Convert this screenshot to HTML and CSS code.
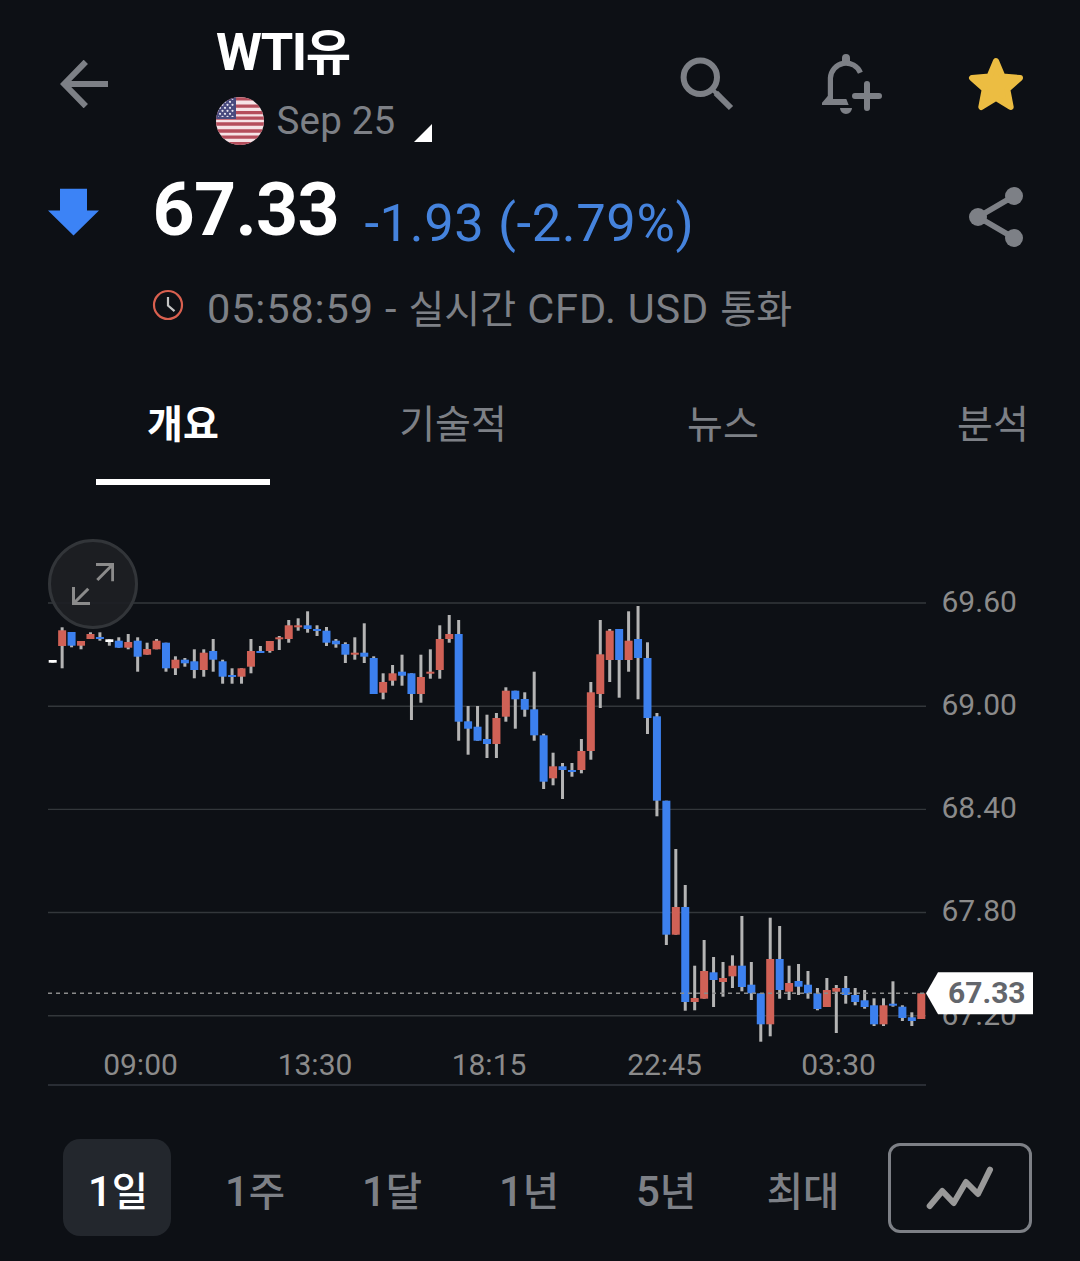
FILE: index.html
```
<!DOCTYPE html>
<html lang="ko">

<head>
    <meta charset="UTF-8">
    <meta name="viewport" content="width=device-width, initial-scale=1.0">
    <title>WTI유</title>
    <link rel="stylesheet" href="styles.css">
</head>

<body>
    <header class="header">
        <svg class="icon-back" width="48" height="48" viewBox="60 60 48 48">
            <path d="M85.8 61.8 64.2 84l21.6 22.2M64 84h44" />
        </svg>
        <div class="header-title">
            <h1>WTI<span class="ko">유</span></h1>
            <div class="contract">
                <svg class="flag" width="48" height="48" viewBox="0 0 48 48">
                    <defs>
                        <clipPath id="flagClip"><circle cx="24" cy="24" r="24" /></clipPath>
                        <pattern id="stars" width="5" height="6" patternUnits="userSpaceOnUse">
                            <circle cx="1.5" cy="1.8" r="1.1" fill="#e6e4f0" />
                            <circle cx="4" cy="4.8" r="1.1" fill="#e6e4f0" />
                        </pattern>
                    </defs>
                    <g clip-path="url(#flagClip)">
                        <rect width="48" height="48" fill="#f6e3e6" />
                        <path d="M0 1.8h48M0 9.2h48M0 15.6h48M0 21.2h48M0 27h48M0 34h48M0 40.2h48M0 46.6h48" stroke="#b54e5c" stroke-width="3.3" />
                        <rect width="20" height="22" fill="#484a7e" />
                        <rect x="2" y="2" width="16" height="18" fill="url(#stars)" />
                    </g>
                </svg>
                <span class="contract-name">Sep 25</span>
                <span class="contract-more"></span>
            </div>
        </div>
        <div class="header-actions">
            <svg width="54" height="54" viewBox="680 56 54 54">
                <circle cx="700.3" cy="76.3" r="16.7" />
                <path d="M713.5 89.5 717 93" stroke-width="4" />
                <path d="M715.8 91.8 731 107" />
            </svg>
            <svg class="bell" width="60" height="62" viewBox="822 53 60 62">
                <path d="M830.4 99V78a15.6 15.6 0 0 1 30-5.2" stroke-width="5.2" />
                <path class="fill" d="M842 63v-5a4 4 0 0 1 8 0v5zM822 105v-2.3l6-7h5V99h13.3l2.4 6zM840 108h12a6 6 0 0 1-12 0z" />
                <path d="M855 96h24M867 84v24" stroke-linecap="round" />
            </svg>
            <svg class="star" width="56" height="56" viewBox="968 56 56 56">
                <path d="M996 61 1002.5 76.5 1020 78 1007.3 89.3 1010.7 107 996 98 981.3 107 984.7 89.3 972 78 989.5 76.5z" />
            </svg>
        </div>
    </header>

    <section class="quote">
        <svg class="quote-arrow" width="51" height="48" viewBox="0 0 51 48">
            <path d="M12 .7h27v21.8h12L25.5 47.6 0 22.500h12z" />
        </svg>
        <span class="quote-last">67.33</span>
        <span class="quote-change">-1.93 (-2.79%)</span>
        <svg class="quote-share" width="56" height="60" viewBox="968 187 56 60">
            <path d="M1014 196 978 217l36 21" />
            <circle cx="1014" cy="196" r="9" />
            <circle cx="978" cy="217" r="9" />
            <circle cx="1014" cy="238" r="9" />
        </svg>
    </section>

    <div class="quote-info">
        <svg width="32" height="32" viewBox="0 0 32 32">
            <circle cx="16" cy="16" r="14" stroke="#d9604f" stroke-width="2.200" />
            <path d="M16 8v8.500l6.500 5.700" stroke="#c4c4c4" stroke-width="2.200" />
        </svg>
        <span>05:58:59 - <span class="ko">실시간</span> CFD. USD <span class="ko">통화</span></span>
    </div>

    <nav class="tabs">
        <a class="tab active">개요</a>
        <a class="tab">기술적</a>
        <a class="tab">뉴스</a>
        <a class="tab">분석</a>
    </nav>

    <section class="chart">
        <svg id="chart" width="1080" height="570" viewBox="0 530 1080 570">
            <g class="grid">
                <path d="M48 603h878M48 706.200h878M48 809.400h878M48 912.500h878M48 1015.700h878" />
                <path class="grid-bottom" d="M48 1085h878" />
            </g>
            <g class="axis">
                <text x="941.5" y="612">69.60</text>
                <text x="941.5" y="715">69.00</text>
                <text x="941.5" y="818">68.40</text>
                <text x="941.5" y="921">67.80</text>
                <text x="941.5" y="1025">67.20</text>
                <text class="time" x="140.500" y="1075">09:00</text>
                <text class="time" x="315" y="1075">13:30</text>
                <text class="time" x="489" y="1075">18:15</text>
                <text class="time" x="664.500" y="1075">22:45</text>
                <text class="time" x="838.500" y="1075">03:30</text>
            </g>
            <g id="candles"></g>
            <path class="last-line" d="M48 993.300h878" />
            <path class="last-tag" d="M926 993.300 938 972.300h95v42h-95z" />
            <text class="last-text" x="948" y="1003.300">67.33</text>
        </svg>
        <button class="expand">
            <svg width="42" height="42" viewBox="72 563 42 42">
                <path d="M96 564.500h16.700v16.700M97.300 580l15.400-15.500M73.500 587v16.500H90M88.300 588.700l-14.800 14.800" />
            </svg>
        </button>
    </section>

    <div class="periods">
        <button class="period active">1<span class="ko">일</span></button>
        <button class="period">1<span class="ko">주</span></button>
        <button class="period">1<span class="ko">달</span></button>
        <button class="period">1<span class="ko">년</span></button>
        <button class="period">5<span class="ko">년</span></button>
        <button class="period"><span class="ko">최대</span></button>
        <button class="chart-type">
            <svg width="68" height="44" viewBox="926 1166 68 44">
                <path d="M929.700 1206l12.600-15 11.400 12 12.300-21 12 12 12-24.300" />
            </svg>
        </button>
    </div>

    <script>
        // [색상, 꼬리 위, 꼬리 아래, 몸통 위, 몸통 아래]
        const candles = [
            ["w", 660, 662.7, 660, 662.7], ["r", 627.3, 668.3, 630.3, 646], ["b", 632, 647.3, 632, 645.7],
            ["r", 641, 649.3, 641, 645.7], ["r", 632.3, 639, 634, 639], ["b", 632.3, 640.7, 637, 639],
            ["w", 639.3, 645.7, 639.3, 642], ["b", 637.3, 647.7, 640.7, 647.7], ["r", 634, 649.3, 642, 647.7],
            ["b", 637.3, 671.7, 640.7, 656.7], ["r", 642.7, 654.7, 649, 654.7], ["r", 639, 649.3, 640.7, 649.3],
            ["b", 642.7, 671.7, 642.7, 668.3], ["r", 656.3, 675, 659.7, 668.3], ["b", 658, 666.7, 659.7, 663.3],
            ["b", 649.3, 678.3, 661.3, 670], ["r", 649.3, 676.7, 652.7, 670], ["b", 639, 671.7, 651, 659.7],
            ["b", 659.7, 683.7, 661.3, 676.7], ["b", 668.3, 683.7, 675, 677], ["r", 668.3, 683.7, 668.3, 676.7],
            ["r", 639, 673.3, 651, 666.7], ["b", 646, 653, 651, 653], ["r", 641, 652.7, 641, 651],
            ["r", 636, 650, 637.3, 639.3], ["r", 620, 642.7, 625.3, 639], ["r", 618.3, 630.7, 625.3, 627.3],
            ["b", 611.3, 632.7, 625.3, 629], ["b", 625.3, 636, 629, 631], ["b", 627, 646, 630.7, 642.7],
            ["b", 639, 647.7, 640.7, 644.3], ["b", 642.3, 663, 644, 654.7], ["r", 637.3, 659.7, 652.7, 654.7],
            ["b", 623.3, 663, 652.7, 656.7], ["b", 656.3, 694, 658, 694], ["r", 673.3, 699.3, 682, 692.7],
            ["r", 665, 685.7, 673.3, 680.7], ["b", 654.7, 685.7, 671.7, 675.7], ["b", 673.3, 720, 673.3, 694],
            ["r", 654.7, 702.7, 677, 694], ["r", 649.3, 678.7, 671.7, 673.7], ["r", 625.3, 678.7, 639, 670],
            ["r", 615, 642.7, 634, 639], ["b", 620, 740.7, 634, 721.7], ["b", 706, 754.7, 721.3, 728.7],
            ["b", 706, 740.7, 726.7, 740.7], ["b", 714.7, 758, 739, 744], ["r", 713, 758, 718, 744],
            ["r", 687.3, 721.7, 690.7, 716.7], ["b", 690.7, 728.7, 690.7, 699.3], ["b", 692.3, 716.7, 699, 709.7],
            ["b", 671.7, 740.7, 709.3, 735.3], ["b", 733.7, 789, 735.3, 781.7], ["r", 752.7, 785.3, 766.3, 778.3],
            ["b", 763, 799, 766.3, 770], ["b", 763, 776.7, 770, 772], ["r", 739, 773.3, 751, 770],
            ["r", 682, 759.7, 692.3, 751], ["r", 620, 708, 654.3, 694], ["r", 629, 682, 630.7, 660],
            ["b", 629, 697.7, 629, 660], ["r", 611.3, 671.7, 640.7, 660], ["b", 606, 699.3, 639, 658],
            ["b", 642.3, 734, 658, 718], ["b", 713, 816.3, 716.3, 800.7], ["b", 800.7, 945, 800.7, 934.7],
            ["r", 849, 934.7, 907, 934.7], ["b", 885, 1010.7, 907, 1002], ["r", 965.7, 1010.3, 998, 1002],
            ["r", 940, 998.7, 971, 998.7], ["b", 957, 1007, 972.3, 980], ["r", 962, 996.7, 978, 982],
            ["r", 955.3, 988, 965.7, 976.3], ["b", 916, 991.3, 965.7, 987], ["b", 962, 1000, 984.7, 993.3],
            ["b", 993.3, 1041.7, 993.3, 1024.3], ["r", 917.7, 1036.3, 959, 1024.3], ["b", 926, 998.7, 959, 990],
            ["r", 965.7, 1000, 983, 991.7], ["b", 964, 995, 981, 986.7], ["b", 971, 998.7, 984.7, 993.3],
            ["b", 988, 1010.3, 993.3, 1009], ["r", 978, 1007, 990, 1007], ["r", 985, 1033, 988, 991.7],
            ["b", 976, 1003.7, 988, 995], ["b", 988, 1005.3, 995, 1002], ["b", 990, 1008.7, 1000.3, 1007],
            ["b", 998.3, 1026, 1005.3, 1024.3], ["r", 998.3, 1026, 1005.3, 1024.3], ["b", 981.3, 1006.7, 1003.7, 1005.7],
            ["b", 1005.3, 1021, 1006.7, 1018], ["b", 1012.3, 1026, 1017.3, 1021], ["r", 993.3, 1019, 993.3, 1019]
        ];

        // 캔들 간격
        const startX = 52.7;
        const step = 9.441;

        let html = "";
        candles.forEach(([color, high, low, top, bottom], i) => {
            const x = startX + step * i;
            html += `<rect class="wick" x="${x - 1.5}" y="${high}" width="3" height="${low - high}" />`;
            html += `<rect class="body-${color}" x="${x - 4}" y="${top}" width="8" height="${bottom - top}" />`;
        });
        document.getElementById("candles").innerHTML = html;
    </script>
</body>

</html>
```

FILE: styles.css
```
* {
    margin: 0;
    padding: 0;
    box-sizing: border-box;
}

body {
    width: 1080px;
    height: 1261px;
    overflow: hidden;
    background: #0d1015;
    color: #7d8086;
    font-family: Roboto, "Noto Sans CJK KR", sans-serif;
}

svg {
    display: block;
    flex: none;
}

button {
    border: 0;
    background: none;
    color: inherit;
    font-family: inherit;
}

.ko {
    font-size: 0.94em;
    letter-spacing: 0;
}

/* header */
.header {
    display: flex;
    height: 160px;
    padding: 22px 56px 0 60px;
}

.icon-back {
    margin-top: 38px;
    fill: none;
    stroke: #7d8086;
    stroke-width: 6;
}

.header-title {
    margin-left: 108px;
}

.header-title h1 {
    height: 60px;
    line-height: 60px;
    font-size: 52.5px;
    font-weight: 700;
    letter-spacing: -1.5px;
    color: #fff;
}

.contract {
    display: flex;
    height: 48px;
    margin-top: 15px;
}

.contract-name {
    margin-left: 12.5px;
    line-height: 48px;
    font-size: 38.5px;
    letter-spacing: 0.2px;
}

.contract-more {
    align-self: flex-end;
    margin: 0 0 3px 18.5px;
    border-bottom: 18px solid #fff;
    border-left: 18px solid transparent;
}

.header-actions {
    display: flex;
    align-items: center;
    height: 62px;
    margin: 31px 0 0 auto;
}

.header-actions svg {
    fill: none;
    stroke: #7d8086;
    stroke-width: 6;
}

.header-actions .bell {
    margin: 0 86px 0 88px;
}

.header-actions .fill {
    fill: #7d8086;
    stroke: none;
}

.header-actions .star {
    fill: #ecbd42;
    stroke: #ecbd42;
    stroke-linejoin: round;
}

/* quote */
.quote {
    display: flex;
    height: 123px;
    padding: 0 56px 0 48px;
}

.quote-arrow {
    margin-top: 28px;
    fill: #3c83f6;
}

.quote-last {
    margin: 10px 0 0 53.5px;
    line-height: 80px;
    font-size: 73.5px;
    font-weight: 700;
    letter-spacing: -0.7px;
    color: #fff;
}

.quote-change {
    margin: 33px 0 0 25.5px;
    line-height: 60px;
    font-size: 52.5px;
    letter-spacing: 0.6px;
    color: #4583dd;
}

.quote-share {
    margin: 27px 0 0 auto;
    fill: #7d8086;
}

.quote-share path {
    fill: none;
    stroke: #7d8086;
    stroke-width: 5.5;
}

.quote-info {
    display: flex;
    gap: 23px;
    height: 97px;
    padding: 1px 0 0 152px;
    line-height: 50px;
    font-size: 41.5px;
    letter-spacing: 0.85px;
}

.quote-info svg {
    margin-top: 5px;
    fill: none;
}

/* tabs */
.tabs {
    display: flex;
    height: 105px;
    padding-left: 48px;
}

.tab {
    display: flex;
    flex: none;
    justify-content: center;
    width: 270px;
    padding-top: 17px;
    line-height: 57px;
    font-size: 39px;
}

.tab.active {
    width: 174px;
    margin: 0 48px;
    border-bottom: 6px solid #fff;
    font-weight: 700;
    color: #fff;
}

/* chart */
.chart {
    position: relative;
    height: 570px;
    margin-top: 45px;
}

.grid path {
    fill: none;
    stroke: #33373b;
    stroke-width: 1.4;
}

.grid .grid-bottom {
    stroke: #292d34;
    stroke-width: 2;
}

.axis text {
    fill: #8b8b8b;
    font-size: 30px;
}

.axis .time {
    text-anchor: middle;
}

.wick {
    fill: #b4b4b4;
}

.body-r {
    fill: #d06156;
}

.body-b {
    fill: #3c80ee;
}

.body-w {
    fill: #fff;
}

.last-line {
    stroke: #8b8b8b;
    stroke-width: 1.5;
    stroke-dasharray: 4 4;
}

.last-tag {
    fill: #fff;
}

.last-text {
    fill: #63666c;
    font-size: 30px;
    font-weight: 700;
}

.expand {
    position: absolute;
    top: 9px;
    left: 48px;
    display: flex;
    align-items: center;
    justify-content: center;
    width: 90px;
    height: 90px;
    border: 3px solid #323539;
    border-radius: 50%;
    background: rgba(29, 32, 36, 0.92);
}

.expand svg {
    fill: none;
    stroke: #8b8b8b;
    stroke-width: 3;
}

/* periods */
.periods {
    display: flex;
    align-items: center;
    gap: 29px;
    padding: 39px 0 0 63px;
}

.period {
    width: 108px;
    height: 97px;
    padding: 8px 0 0 2px;
    border-radius: 17px;
    line-height: 89px;
    font-size: 42px;
    font-weight: 500;
}

.period.active {
    background: #23272d;
    color: #fff;
}

.chart-type {
    display: flex;
    align-items: center;
    justify-content: center;
    width: 144px;
    height: 90px;
    margin-left: 3px;
    border: 3px solid #7d8086;
    border-radius: 12px;
}

.chart-type svg {
    fill: none;
    stroke: #999;
    stroke-width: 6;
    stroke-linecap: round;
    stroke-linejoin: round;
}
```
